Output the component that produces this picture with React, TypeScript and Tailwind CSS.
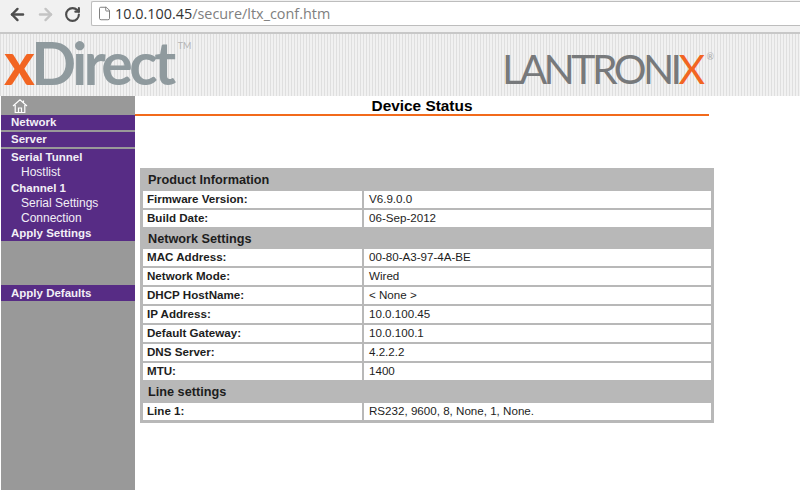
import { ArrowLeft, ArrowRight, File, RotateCw } from "lucide-react";

type Row = { label: string; value?: string };

const rows: Row[] = [
  { label: "Product Information" },
  { label: "Firmware Version:", value: "V6.9.0.0" },
  { label: "Build Date:", value: "06-Sep-2012" },
  { label: "Network Settings" },
  { label: "MAC Address:", value: "00-80-A3-97-4A-BE" },
  { label: "Network Mode:", value: "Wired" },
  { label: "DHCP HostName:", value: "< None >" },
  { label: "IP Address:", value: "10.0.100.45" },
  { label: "Default Gateway:", value: "10.0.100.1" },
  { label: "DNS Server:", value: "4.2.2.2" },
  { label: "MTU:", value: "1400" },
  { label: "Line settings" },
  { label: "Line 1:", value: "RS232, 9600, 8, None, 1, None." },
];

const Toolbar = () => (
  <div className="flex h-[32px] items-start bg-[#f1f1f1]">
    <div className="flex h-[28px] items-center gap-[9px] pl-[8px] pr-[10px]">
      <ArrowLeft className="h-[19px] w-[19px] text-[#4d4d4d]" strokeWidth={3} />
      <ArrowRight className="h-[19px] w-[19px] text-[#c4c4c4]" strokeWidth={3} />
      <RotateCw className="h-[17px] w-[17px] text-[#4d4d4d]" strokeWidth={3} />
    </div>
    <div className="mt-[1px] flex h-[25px] flex-1 items-center gap-[3px] rounded-l-[2px] border border-r-0 border-[#bdbdbd] bg-white pl-[5px] font-['Open_Sans',sans-serif] text-[14.4px]">
      <File className="h-[15px] w-[15px] text-[#777]" strokeWidth={1.5} />
      <span className="text-[#333]">
        10.0.100.45<span className="text-[#808080]">/secure/ltx_conf.htm</span>
      </span>
    </div>
  </div>
);

const Banner = () => (
  <div className="flex h-[64px] items-start justify-between border-t-2 border-[#c8c8c8] bg-[repeating-linear-gradient(90deg,#dfdfdf_0px,#dfdfdf_1px,#f1f1f1_1px,#f1f1f1_3px)]">
    <div className="ml-[4px] mt-[-6px] flex items-start font-['Lato',sans-serif] text-[59px] font-bold leading-[70px] tracking-[-3.5px] text-[#8f9a9e]">
      <span className="text-[#f26522]">x</span>
      <span>Direct</span>
      <span className="ml-[5px] mt-[13px] text-[9px] font-normal leading-[10px] tracking-normal text-[#b5b5b5]">TM</span>
    </div>
    <div className="mr-[86px] mt-[9px] flex items-start font-['Lato',sans-serif] text-[41px] font-normal leading-[52px] tracking-[-3.6px] text-[#77797b]">
      <span>LANTRONI</span>
      <span className="text-[#f26522]">X</span>
      <span className="ml-[5px] mt-[9px] text-[9px] leading-[10px] tracking-normal text-[#aaa]">®</span>
    </div>
  </div>
);

const Sidebar = () => (
  <nav className="ml-[1px] flex w-[134px] flex-col bg-[#999999] text-[11.5px] font-bold leading-[15.3px] text-[#f2eff6]">
    <div className="flex h-[19px] items-center pl-[11px]">
      <svg viewBox="0 0 16 16" className="h-[16px] w-[16px]" fill="none" stroke="#fff" strokeWidth="1.2">
        <path d="M1 8 8 1.8 15 8M3.2 7v7.5h9.6V7M6.5 14.5V10h3v4.5M11.5 2.5v2.5" />
      </svg>
    </div>
    <div className="h-[15px] bg-[#572c85] pl-[10px]">Network</div>
    <div className="mt-[2px] h-[15px] bg-[#572c85] pl-[10px]">Server</div>
    <div className="mt-[2px] flex h-[92px] flex-col bg-[#572c85] pl-[10px] pt-[1px]">
      <span>Serial Tunnel</span>
      <span className="pl-[10px] text-[12px] font-normal">Hostlist</span>
      <span>Channel 1</span>
      <span className="pl-[10px] text-[12px] font-normal">Serial Settings</span>
      <span className="pl-[10px] text-[12px] font-normal">Connection</span>
      <span>Apply Settings</span>
    </div>
    <div className="mt-[44px] h-[16px] bg-[#572c85] pl-[10px] pt-[0.5px]">Apply Defaults</div>
    <div className="flex-1" />
  </nav>
);

const StatusTable = () => (
  <div className="ml-[5px] mt-[52px] flex w-[574px] flex-col gap-[2px] bg-[#b8b8b8] px-[3px] pb-[3px] pt-[2px] text-[11.6px] text-[#1d1d1d]">
    {rows.map((row) =>
      row.value === undefined ? (
        <div key={row.label} className="h-[18.7px] pl-[5px] text-[12.7px] font-bold leading-[20px]">
          {row.label}
        </div>
      ) : (
        <div key={row.label} className="flex h-[17px] gap-[2px] leading-[16px]">
          <div className="w-[219px] bg-white pl-[4px] font-bold">{row.label}</div>
          <div className="flex-1 bg-white pl-[5px]">{row.value}</div>
        </div>
      ),
    )}
  </div>
);

export default function App() {
  return (
    <div className="flex h-[490px] w-[800px] flex-col overflow-hidden bg-white font-['Liberation_Sans',Arial,sans-serif]">
      <Toolbar />
      <Banner />
      <div className="flex flex-1">
        <Sidebar />
        <main className="flex-1">
          <div className="h-[20px] w-[574px] border-b-2 border-[#f26a1b] text-center text-[15.4px] font-bold leading-[19px] text-black">
            Device Status
          </div>
          <StatusTable />
        </main>
      </div>
    </div>
  );
}
